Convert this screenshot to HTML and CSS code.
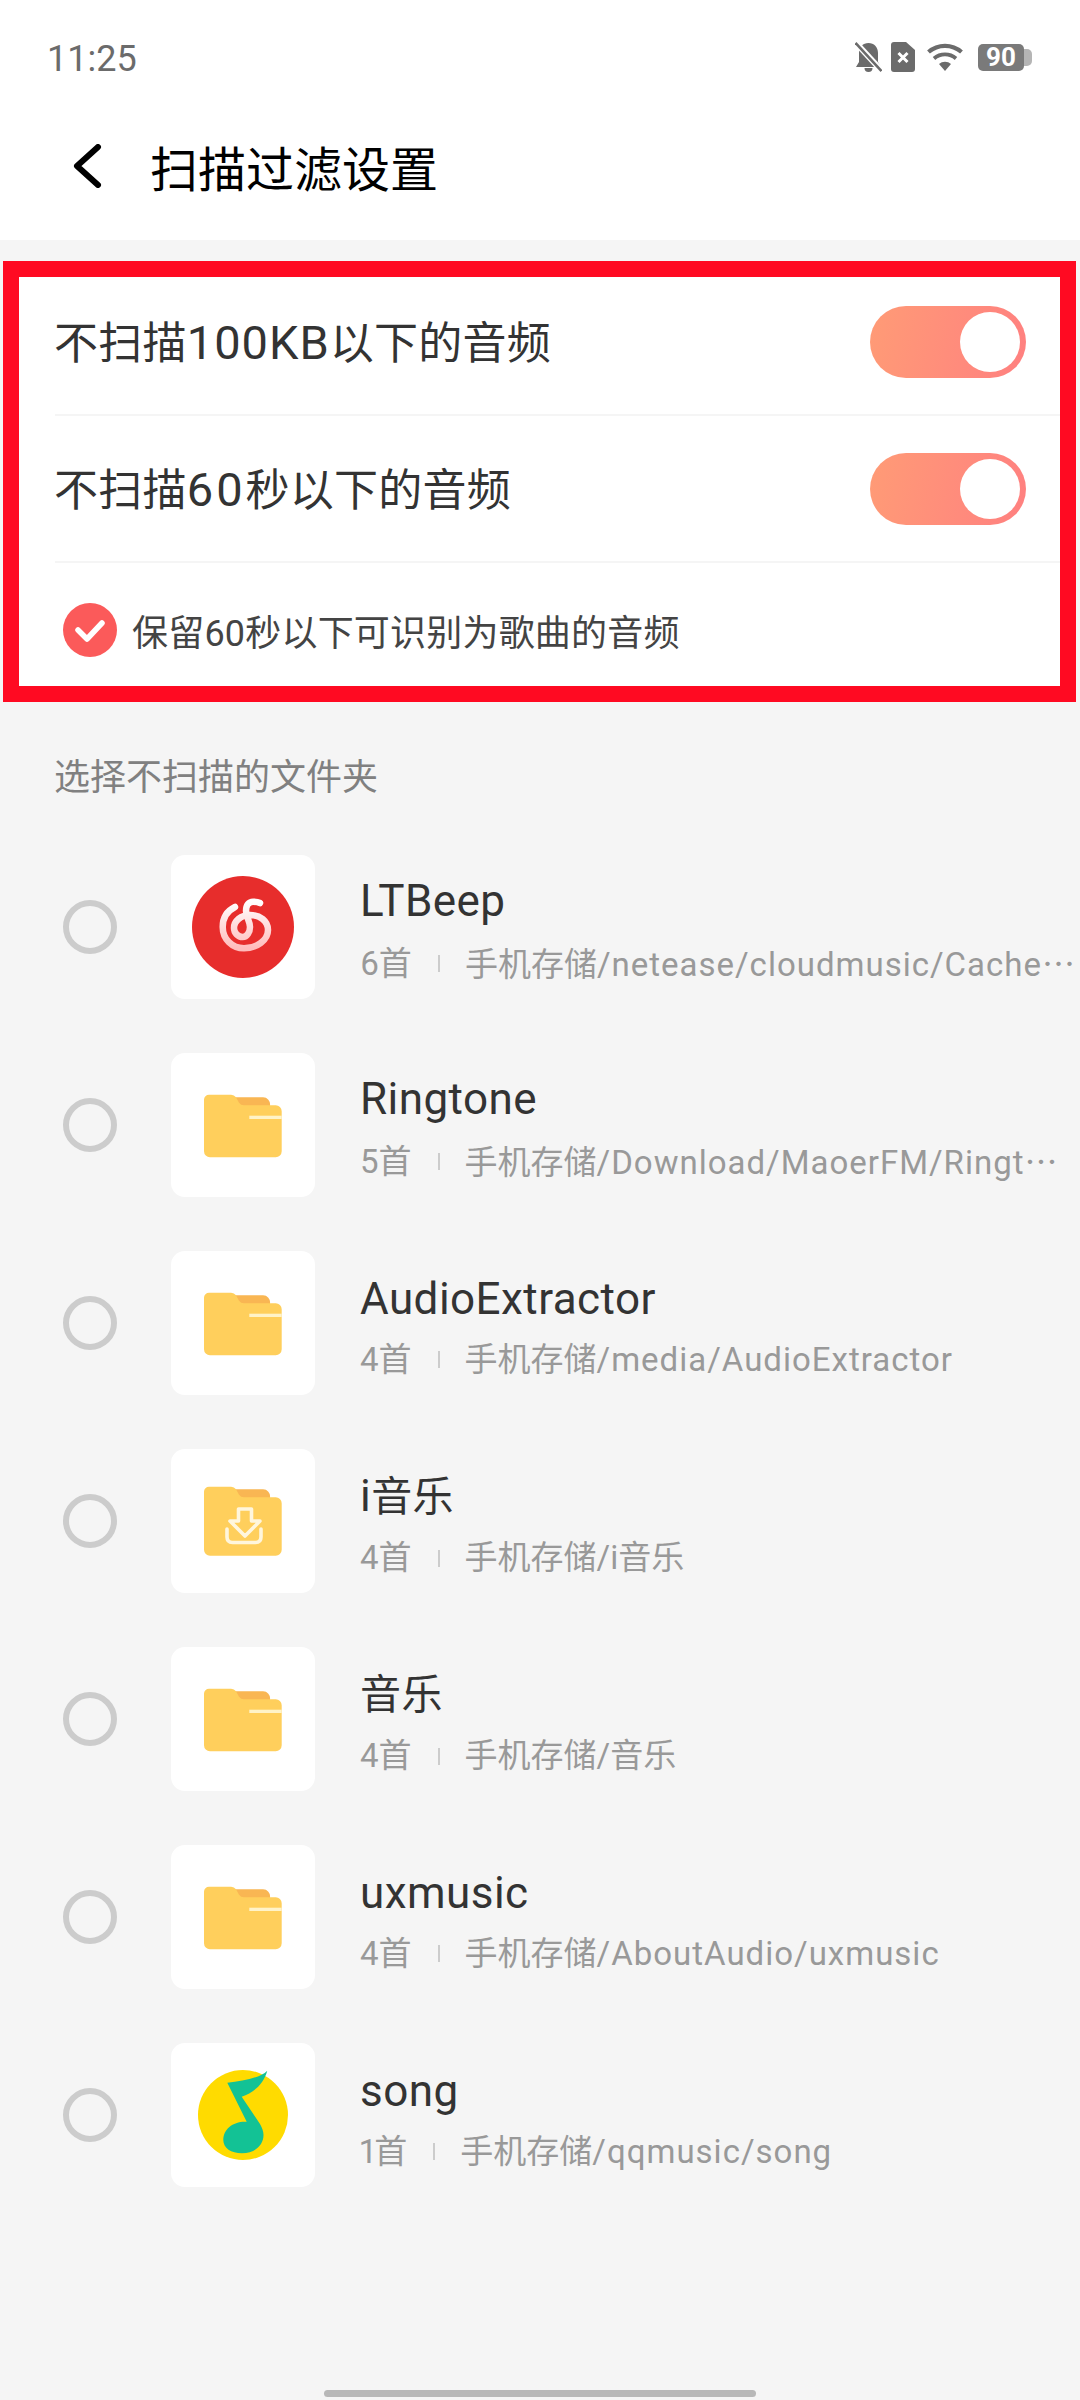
FILE: index.html
```html
<!DOCTYPE html>
<html lang="zh-CN">
<head>
    <meta charset="UTF-8">
    <meta name="viewport" content="width=device-width, initial-scale=1.0">
    <title>扫描过滤设置</title>
    <link rel="stylesheet" href="styles.css">
</head>
<body>
    <svg class="defs" width="0" height="0">
        <defs>
            <symbol id="folder" viewBox="0 0 144 144">
                <path d="M62 44.300H92a7 7 0 0 1 7 8V60H62z" fill="#f9b653"/>
                <path d="M38 41.700H60a6 6 0 0 1 5 2.600l3 5.400a6 6 0 0 0 5 2.600h31.700a6 6 0 0 1 6 6V98.300a6 6 0 0 1-6 6H39a6 6 0 0 1-6-6V46.700a5 5 0 0 1 5-5z" fill="#ffcf5c"/>
                <rect x="78.300" y="62.700" width="32.400" height="3.300" fill="#fff3c8"/>
            </symbol>
        </defs>
    </svg>

    <div class="status-bar">
        <span class="time">11:25</span>
        <div class="status-icons">
            <svg class="ic-bell" width="27" height="30" viewBox="0 0 27 30">
                <path d="M13.500 1C19 1 23 5 23 11V20L26 25H1L4 20V11C4 5 8 1 13.500 1Z" fill="#6b6b6b"/>
                <path d="M9.500 26H17.500A4 4 0 0 1 9.500 26Z" fill="#6b6b6b"/>
                <path d="M1 1L26 28" stroke="#fff" stroke-width="6"/>
                <path d="M0.500 1L26.500 29" stroke="#6b6b6b" stroke-width="2.600"/>
            </svg>
            <svg class="ic-sim" width="24" height="30" viewBox="0 0 24 30">
                <path d="M3 0H15L24 8V27A3 3 0 0 1 21 30H3A3 3 0 0 1 0 27V3A3 3 0 0 1 3 0Z" fill="#6b6b6b"/>
                <path d="M7.500 11L16.500 20M16.500 11L7.500 20" stroke="#fff" stroke-width="3"/>
            </svg>
            <svg class="ic-wifi" width="36" height="28" viewBox="0 0 36 28">
                <path d="M1.500 9A25 25 0 0 1 34.500 9" fill="none" stroke="#6b6b6b" stroke-width="4.200"/>
                <path d="M7 15.500A17 17 0 0 1 29 15.500" fill="none" stroke="#6b6b6b" stroke-width="3.800"/>
                <path d="M12 21A9 9 0 0 1 24 21L18 28Z" fill="#6b6b6b"/>
            </svg>
            <div class="battery">
                <span class="battery-level">90</span>
                <span class="battery-tip"></span>
            </div>
        </div>
    </div>

    <div class="header">
        <svg class="back" width="30" height="44" viewBox="0 0 30 44">
            <path d="M26 3L5 22L26 41" fill="none" stroke="#000" stroke-width="6" stroke-linecap="round" stroke-linejoin="round"/>
        </svg>
        <span class="title">扫描过滤设置</span>
    </div>

    <div class="filter-box">
        <div class="filter-row first">
            <span class="filter-label">不扫描<span class="num">100KB</span>以下的音频</span>
            <div class="toggle"><span class="knob"></span></div>
        </div>
        <div class="filter-row">
            <span class="filter-label">不扫描<span class="num short">60</span>秒以下的音频</span>
            <div class="toggle"><span class="knob"></span></div>
        </div>
        <div class="keep-row">
            <svg width="54" height="54" viewBox="0 0 54 54">
                <circle cx="27" cy="27" r="27" fill="#fb5a5a"/>
                <path d="M15 27L24 36L39 20" fill="none" stroke="#fff" stroke-width="5.500" stroke-linecap="round" stroke-linejoin="round"/>
            </svg>
            <span class="keep-label">保留60秒以下可识别为歌曲的音频</span>
        </div>
    </div>

    <div class="section-title">选择不扫描的文件夹</div>

    <div class="folder-list">
        <div class="folder-row">
            <span class="radio"></span>
            <div class="folder-icon">
                <svg width="144" height="144" viewBox="0 0 144 144">
                    <defs>
                        <linearGradient id="swirl" x1="0" y1="0" x2="0" y2="1">
                            <stop offset="0" stop-color="#fff"/>
                            <stop offset="1" stop-color="#ffbcbc"/>
                        </linearGradient>
                    </defs>
                    <circle cx="72" cy="72" r="51" fill="#e72d2c"/>
                    <path d="M64 52C56 56 51.700 63 51.700 72C51.700 84 61 93.300 73 93.300C86 93.300 97 85 97 75C97 66 89 60 79 60C70 60 63 66 63 73C63 78 67 82 71.700 82C76 82 79 77 79 72C79 66 75 62 75 56C75 50 78 46.700 82 46.700C85 46.700 87 47 89 48" fill="none" stroke="url(#swirl)" stroke-width="6.500" stroke-linecap="round"/>
                </svg>
            </div>
            <div class="folder-info">
                <div class="folder-name">LTBeep</div>
                <div class="folder-meta"><span class="count">6首</span><i class="sep"></i><span class="path"><span class="root">手机存储</span>/netease/cloudmusic/Cache<span class="more">…</span></span></div>
            </div>
        </div>
        <div class="folder-row">
            <span class="radio"></span>
            <div class="folder-icon"><svg width="144" height="144"><use href="#folder"/></svg></div>
            <div class="folder-info">
                <div class="folder-name">Ringtone</div>
                <div class="folder-meta"><span class="count">5首</span><i class="sep"></i><span class="path"><span class="root">手机存储</span>/Download/MaoerFM/Ringt<span class="more">…</span></span></div>
            </div>
        </div>
        <div class="folder-row">
            <span class="radio"></span>
            <div class="folder-icon"><svg width="144" height="144"><use href="#folder"/></svg></div>
            <div class="folder-info">
                <div class="folder-name">AudioExtractor</div>
                <div class="folder-meta"><span class="count">4首</span><i class="sep"></i><span class="path"><span class="root">手机存储</span>/media/AudioExtractor</span></div>
            </div>
        </div>
        <div class="folder-row">
            <span class="radio"></span>
            <div class="folder-icon">
                <svg width="144" height="144" viewBox="0 0 144 144">
                    <path d="M62 40.300H92a7 7 0 0 1 7 8V56H62z" fill="#f9b653"/>
                    <path d="M38 37.700H60a6 6 0 0 1 5 2.600l3 5.400a6 6 0 0 0 5 2.600h31.700a6 6 0 0 1 6 6V100.700a6 6 0 0 1-6 6H39a6 6 0 0 1-6-6V42.700a5 5 0 0 1 5-5z" fill="#ffcf5c"/>
                    <path d="M56 80V88Q56 93.500 61.500 93.500H84.500Q90 93.500 90 88V80" fill="none" stroke="#fff6dd" stroke-width="3.600" stroke-linecap="round"/>
                    <path d="M67.500 60H80.500V72H89L74 87L59 72H67.500Z" fill="#ffcf5c" stroke="#fff6dd" stroke-width="3.600" stroke-linejoin="round"/>
                </svg>
            </div>
            <div class="folder-info">
                <div class="folder-name">i<span class="name-cjk">音乐</span></div>
                <div class="folder-meta"><span class="count">4首</span><i class="sep"></i><span class="root">手机存储/i音乐</span></div>
            </div>
        </div>
        <div class="folder-row">
            <span class="radio"></span>
            <div class="folder-icon"><svg width="144" height="144"><use href="#folder"/></svg></div>
            <div class="folder-info">
                <div class="folder-name"><span class="name-cjk">音乐</span></div>
                <div class="folder-meta"><span class="count">4首</span><i class="sep"></i><span class="root">手机存储/音乐</span></div>
            </div>
        </div>
        <div class="folder-row">
            <span class="radio"></span>
            <div class="folder-icon"><svg width="144" height="144"><use href="#folder"/></svg></div>
            <div class="folder-info">
                <div class="folder-name">uxmusic</div>
                <div class="folder-meta"><span class="count">4首</span><i class="sep"></i><span class="path"><span class="root">手机存储</span>/AboutAudio/uxmusic</span></div>
            </div>
        </div>
        <div class="folder-row">
            <span class="radio"></span>
            <div class="folder-icon">
                <svg width="144" height="144" viewBox="0 0 144 144">
                    <circle cx="72" cy="72" r="45" fill="#ffdb00"/>
                    <path d="M96.300 27.700C89 35 72 38 56.300 39.700L75.700 78.700C62 78 52.300 86 52.300 97C52.300 105 60 110.300 71 110.300C84 110.300 92.500 102 92.500 92C92.500 88 91 85 89 81L70.700 53.700C82 50 92 42 96.300 27.700Z" fill="#13c295"/>
                </svg>
            </div>
            <div class="folder-info">
                <div class="folder-name">song</div>
                <div class="folder-meta"><span class="count">1首</span><i class="sep"></i><span class="path"><span class="root">手机存储</span>/qqmusic/song</span></div>
            </div>
        </div>
    </div>

    <div class="home-bar"></div>
</body>
</html>
```

FILE: styles.css
```css
* {
    box-sizing: border-box;
}
html, body {
    margin: 0;
    padding: 0;
}
body {
    width: 1080px;
    height: 2400px;
    overflow: hidden;
    background-color: #f5f5f5;
    font-family: Roboto, "Noto Sans CJK SC", sans-serif;
}
.defs {
    display: block;
    height: 0;
}

/* status bar */
.status-bar {
    height: 80px;
    padding: 34px 48px 0 47px;
    display: flex;
    align-items: center;
    justify-content: space-between;
    background-color: #fff;
}
.time {
    padding-top: 4px;
    font-size: 36px;
    color: #6b6b6b;
}
.status-icons {
    display: flex;
    align-items: center;
}
.ic-sim {
    margin-left: 9px;
}
.ic-wifi {
    margin-left: 12px;
}
.battery {
    width: 54px;
    height: 27px;
    margin-left: 15px;
    display: flex;
    align-items: center;
}
.battery-level {
    width: 46px;
    height: 27px;
    border-radius: 5px;
    background-color: #7a7a7a;
    color: #fff;
    font-size: 26px;
    font-weight: 700;
    line-height: 27px;
    text-align: center;
}
.battery-tip {
    width: 8px;
    height: 17px;
    border-radius: 0 5px 5px 0;
    background-color: #b5b5b5;
}

/* header */
.header {
    height: 160px;
    padding: 12px 0 0 72px;
    display: flex;
    align-items: center;
    background-color: #fff;
}
.title {
    margin-left: 48px;
    font-size: 48px;
    color: #000;
}

/* red marked box */
.filter-box {
    width: 1073px;
    height: 441px;
    margin: 21px 0 0 3px;
    border: 16px solid #ff0a22;
    background-color: #fff;
}
.filter-row {
    height: 147px;
    margin-left: 36px;
    padding-right: 34px;
    border-bottom: 2px solid #f5f5f5;
    display: flex;
    align-items: center;
    justify-content: space-between;
}
.filter-row.first {
    height: 139px;
    padding-bottom: 8px;
}
.filter-label {
    margin-left: -1px;
    padding-top: 4px;
    font-size: 44px;
    line-height: 60px;
    letter-spacing: 0.25px;
    color: #333;
}
.num {
    font-size: 47px;
    letter-spacing: 1px;
}
.num.short {
    letter-spacing: 3px;
}
.toggle {
    width: 156px;
    height: 72px;
    padding: 6px;
    border-radius: 36px;
    display: flex;
    justify-content: flex-end;
    background: linear-gradient(100deg, #ff9b76, #ff8080);
}
.knob {
    width: 60px;
    height: 60px;
    border-radius: 50%;
    background-color: #fff;
}
.keep-row {
    height: 122px;
    padding: 12px 0 0 44px;
    display: flex;
    align-items: center;
}
.keep-label {
    margin-left: 15px;
    font-size: 36px;
    letter-spacing: 0.2px;
    color: #444;
}

/* folders */
.section-title {
    padding: 51px 0 25px 54px;
    font-size: 36px;
    line-height: 50px;
    color: #808080;
}
.folder-row {
    height: 198px;
    padding-left: 63px;
    display: flex;
    align-items: center;
}
.radio {
    width: 54px;
    height: 54px;
    border: 6px solid #ccc;
    border-radius: 50%;
}
.folder-icon {
    width: 144px;
    height: 144px;
    margin-left: 54px;
    border-radius: 14px;
    background-color: #fff;
}
.folder-icon svg {
    display: block;
}
.folder-info {
    margin-left: 45px;
    padding-top: 7px;
    white-space: nowrap;
}
.folder-name {
    font-size: 44px;
    line-height: 52px;
    letter-spacing: 0.45px;
    color: #333;
}
.name-cjk {
    font-size: 41px;
}
.folder-meta {
    margin-top: 14px;
    display: flex;
    align-items: center;
    font-size: 33px;
    line-height: 42px;
    color: #999;
}
.count {
    font-variant-numeric: proportional-nums;
}
.sep {
    width: 2px;
    height: 17px;
    margin: 0 25px 0 26px;
    background-color: #ccc;
}
.path {
    letter-spacing: 1px;
}
.root {
    letter-spacing: 0;
}
.more {
    font-family: "Noto Sans CJK SC", sans-serif;
    letter-spacing: 0;
}

.home-bar {
    width: 432px;
    height: 7px;
    margin: 176px auto 0;
    border-radius: 4px;
    background-color: #b8b8b8;
}
```
